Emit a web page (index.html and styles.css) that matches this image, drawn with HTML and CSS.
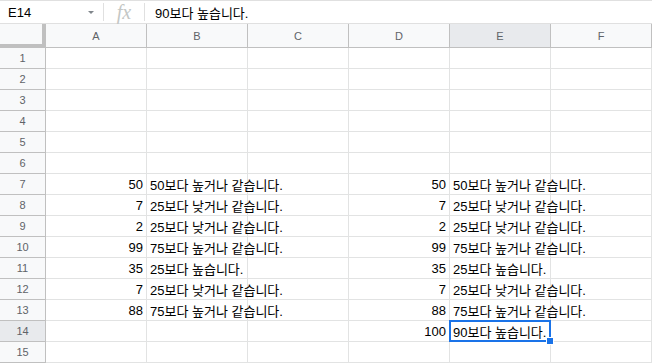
FILE: index.html
```html
<!DOCTYPE html>
<html lang="ko">
<head>
    <meta charset="UTF-8">
    <title>Sheet</title>
    <link rel="stylesheet" href="styles.css">
</head>
<body>
    <div class="formula-bar">
        <div class="name-box">
            <span>E14</span>
            <span class="arrow"></span>
        </div>
        <div class="fx">fx</div>
        <div class="formula-text">90보다 높습니다.</div>
    </div>
    <table class="grid">
        <colgroup>
            <col class="c-head">
            <col class="c"><col class="c"><col class="c"><col class="c"><col class="c"><col class="c">
        </colgroup>
        <thead>
            <tr>
                <th class="corner"></th>
                <th>A</th><th>B</th><th>C</th><th>D</th><th class="sel">E</th><th>F</th>
            </tr>
        </thead>
        <tbody>
            <tr><th>1</th><td></td><td></td><td></td><td></td><td></td><td></td></tr>
            <tr><th>2</th><td></td><td></td><td></td><td></td><td></td><td></td></tr>
            <tr><th>3</th><td></td><td></td><td></td><td></td><td></td><td></td></tr>
            <tr><th>4</th><td></td><td></td><td></td><td></td><td></td><td></td></tr>
            <tr><th>5</th><td></td><td></td><td></td><td></td><td></td><td></td></tr>
            <tr><th>6</th><td></td><td></td><td></td><td></td><td></td><td></td></tr>
            <tr><th>7</th><td class="num">50</td><td class="txt">50보다 높거나 같습니다.</td><td></td><td class="num">50</td><td class="txt">50보다 높거나 같습니다.</td><td></td></tr>
            <tr><th>8</th><td class="num">7</td><td class="txt">25보다 낮거나 같습니다.</td><td></td><td class="num">7</td><td class="txt">25보다 낮거나 같습니다.</td><td></td></tr>
            <tr><th>9</th><td class="num">2</td><td class="txt">25보다 낮거나 같습니다.</td><td></td><td class="num">2</td><td class="txt">25보다 낮거나 같습니다.</td><td></td></tr>
            <tr><th>10</th><td class="num">99</td><td class="txt">75보다 높거나 같습니다.</td><td></td><td class="num">99</td><td class="txt">75보다 높거나 같습니다.</td><td></td></tr>
            <tr><th>11</th><td class="num">35</td><td class="txt">25보다 높습니다.</td><td></td><td class="num">35</td><td class="txt">25보다 높습니다.</td><td></td></tr>
            <tr><th>12</th><td class="num">7</td><td class="txt">25보다 낮거나 같습니다.</td><td></td><td class="num">7</td><td class="txt">25보다 낮거나 같습니다.</td><td></td></tr>
            <tr><th>13</th><td class="num">88</td><td class="txt">75보다 높거나 같습니다.</td><td></td><td class="num">88</td><td class="txt">75보다 높거나 같습니다.</td><td></td></tr>
            <tr><th class="sel">14</th><td></td><td></td><td></td><td class="num">100</td><td class="txt active">90보다 높습니다.<span class="handle"></span></td><td></td></tr>
            <tr><th>15</th><td></td><td></td><td></td><td></td><td></td><td></td></tr>
        </tbody>
    </table>
</body>
</html>
```

FILE: styles.css
```css
body {
    margin: 0;
    background-color: white;
    font-family: "Liberation Sans", Arial, "Noto Sans CJK KR", sans-serif;
    color: #000;
    overflow: hidden;
}
.formula-bar {
    display: flex;
    align-items: center;
    height: 24px;
    border-top: 1px solid #e0e0e0;
    border-bottom: 1px solid #e0e0e0;
    box-sizing: border-box;
    font-size: 13px;
}
.name-box {
    display: flex;
    align-items: center;
    justify-content: space-between;
    box-sizing: border-box;
    width: 104px;
    padding-left: 8px;
    padding-right: 9px;
    height: 18px;
    border-right: 1px solid #e0e0e0;
}
.arrow {
    width: 0;
    height: 0;
    border-left: 3px solid transparent;
    border-right: 3px solid transparent;
    border-top: 3px solid #80868b;
}
.fx {
    box-sizing: border-box;
    width: 41px;
    height: 18px;
    line-height: 18px;
    text-align: center;
    font-family: "Liberation Serif", serif;
    font-style: italic;
    font-size: 20px;
    color: #c4c7c5;
    border-right: 1px solid #e0e0e0;
}
.formula-text {
    padding-left: 10px;
}
.grid {
    border-collapse: separate;
    border-spacing: 0;
    table-layout: fixed;
    width: 652px;
    font-size: 13px;
}
.c-head {
    width: 46px;
}
.c {
    width: 101px;
}
th, td {
    box-sizing: border-box;
    height: 21px;
    padding: 0 3px;
    border-right: 1px solid #e2e3e3;
    border-bottom: 1px solid #e2e3e3;
    white-space: nowrap;
    overflow: visible;
}
thead th {
    height: 24px;
    background-color: #f8f9fa;
    color: #5f6368;
    font-weight: normal;
    font-size: 11px;
    border-right: 1px solid #c0c0c0;
    border-bottom: 1px solid #c0c0c0;
}
thead th.corner {
    border-right: 4px solid #c0c0c0;
    border-bottom: 4px solid #c0c0c0;
}
tbody th {
    background-color: #f8f9fa;
    color: #5f6368;
    font-weight: normal;
    font-size: 11px;
    text-align: center;
    border-right: 1px solid #c0c0c0;
    border-bottom: 1px solid #c0c0c0;
}
th.sel {
    background-color: #e8eaed;
}
.num {
    text-align: right;
}
.txt {
    text-align: left;
}
.active {
    position: relative;
    overflow: visible;
}
.active::before {
    content: "";
    position: absolute;
    left: -1px;
    top: -1px;
    right: -1px;
    bottom: -1px;
    border: 2px solid #1a73e8;
}
.handle {
    position: absolute;
    right: -4px;
    bottom: -4px;
    width: 6px;
    height: 6px;
    background-color: #1a73e8;
    border: 1px solid white;
}
```
